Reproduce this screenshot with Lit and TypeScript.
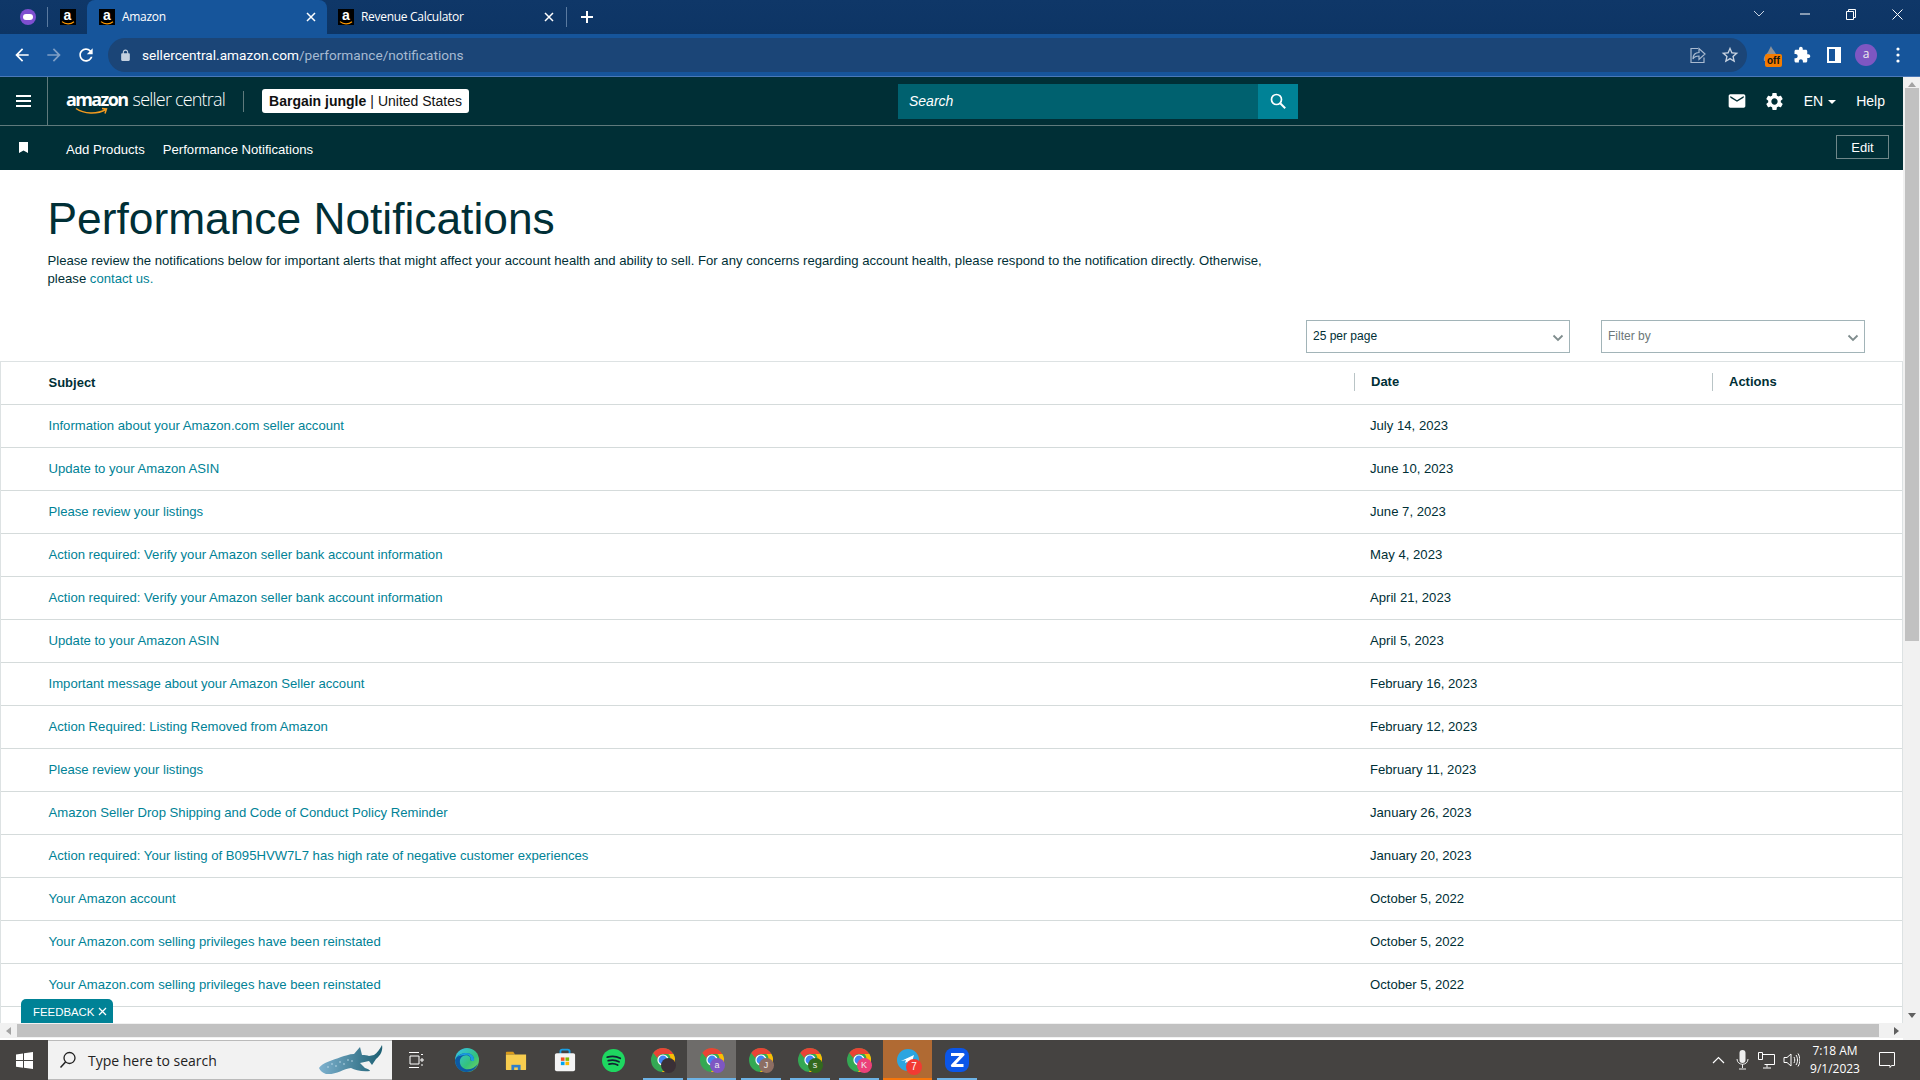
import { LitElement, html, css, svg } from "lit";
import { customElement } from "lit/decorators.js";

const ROWS: [string, string][] = [
  ["Information about your Amazon.com seller account", "July 14, 2023"],
  ["Update to your Amazon ASIN", "June 10, 2023"],
  ["Please review your listings", "June 7, 2023"],
  ["Action required: Verify your Amazon seller bank account information", "May 4, 2023"],
  ["Action required: Verify your Amazon seller bank account information", "April 21, 2023"],
  ["Update to your Amazon ASIN", "April 5, 2023"],
  ["Important message about your Amazon Seller account", "February 16, 2023"],
  ["Action Required: Listing Removed from Amazon", "February 12, 2023"],
  ["Please review your listings", "February 11, 2023"],
  ["Amazon Seller Drop Shipping and Code of Conduct Policy Reminder", "January 26, 2023"],
  ["Action required: Your listing of B095HVW7L7 has high rate of negative customer experiences", "January 20, 2023"],
  ["Your Amazon account", "October 5, 2022"],
  ["Your Amazon.com selling privileges have been reinstated", "October 5, 2022"],
  ["Your Amazon.com selling privileges have been reinstated", "October 5, 2022"],
  ["Your Amazon.com Selling Account", "September 28, 2022"],
];

const P = {
  back: "M20 11H7.83l5.59-5.59L12 4l-8 8 8 8 1.41-1.41L7.83 13H20v-2z",
  fwd: "M12 4l-1.41 1.41L16.17 11H4v2h12.17l-5.58 5.59L12 20l8-8z",
  reload: "M17.65 6.35C16.2 4.9 14.21 4 12 4c-4.42 0-7.99 3.58-7.99 8s3.57 8 7.99 8c3.73 0 6.84-2.55 7.73-6h-2.08c-.82 2.33-3.04 4-5.65 4-3.31 0-6-2.69-6-6s2.69-6 6-6c1.66 0 3.14.69 4.22 1.78L13 11h7V4l-2.35 2.35z",
  lock: "M18 8h-1V6c0-2.76-2.24-5-5-5S7 3.24 7 6v2H6c-1.1 0-2 .9-2 2v10c0 1.1.9 2 2 2h12c1.1 0 2-.9 2-2V10c0-1.1-.9-2-2-2zM9 6c0-1.66 1.34-3 3-3s3 1.34 3 3v2H9V6z",
  star: "M22 9.24l-7.19-.62L12 2 9.19 8.63 2 9.24l5.46 4.73L5.82 21 12 17.27 18.18 21l-1.63-7.03L22 9.24zM12 15.4l-3.76 2.27 1-4.28-3.32-2.88 4.38-.38L12 6.1l1.71 4.04 4.38.38-3.32 2.88 1 4.28L12 15.4z",
  puzzle: "M20.5 11H19V7c0-1.1-.9-2-2-2h-4V3.5C13 2.12 11.88 1 10.5 1S8 2.12 8 3.5V5H4c-1.1 0-1.99.9-1.99 2v3.8H3.5c1.49 0 2.7 1.21 2.7 2.7s-1.21 2.7-2.7 2.7H2V20c0 1.1.9 2 2 2h3.8v-1.5c0-1.49 1.21-2.7 2.7-2.7 1.49 0 2.7 1.21 2.7 2.7V22H17c1.1 0 2-.9 2-2v-4h1.5c1.38 0 2.5-1.12 2.5-2.5S21.88 11 20.5 11z",
  mail: "M20 4H4c-1.1 0-2 .9-2 2v12c0 1.1.9 2 2 2h16c1.1 0 2-.9 2-2V6c0-1.1-.9-2-2-2zm0 4l-8 5-8-5V6l8 5 8-5v2z",
  gear: "M19.14 12.94c.04-.3.06-.61.06-.94 0-.32-.02-.64-.07-.94l2.03-1.58c.18-.14.23-.41.12-.61l-1.92-3.32c-.12-.22-.37-.29-.59-.22l-2.39.96c-.5-.38-1.03-.7-1.62-.94l-.36-2.54c-.04-.24-.24-.41-.48-.41h-3.84c-.24 0-.43.17-.47.41l-.36 2.54c-.59.24-1.13.57-1.62.94l-2.39-.96c-.22-.08-.47 0-.59.22L2.74 8.87c-.12.21-.08.47.12.61l2.03 1.58c-.05.3-.09.63-.09.94s.02.64.07.94l-2.03 1.58c-.18.14-.23.41-.12.61l1.92 3.32c.12.22.37.29.59.22l2.39-.96c.5.38 1.03.7 1.62.94l.36 2.54c.05.24.24.41.48.41h3.84c.24 0 .44-.17.47-.41l.36-2.54c.59-.24 1.13-.56 1.62-.94l2.39.96c.22.08.47 0 .59-.22l1.92-3.32c.12-.22.07-.47-.12-.61l-2.01-1.58zM12 15.6c-1.98 0-3.6-1.62-3.6-3.6s1.62-3.6 3.6-3.6 3.6 1.62 3.6 3.6-1.62 3.6-3.6 3.6z",
};

const ic = (d: string, size: number, fill = "#fff") =>
  html`<svg width=${size} height=${size} viewBox="0 0 24 24"><path d=${d} fill=${fill}></path></svg>`;

const fav = () => html`<span class="fav"><span class="fav-a">a</span><svg class="fav-s" width="14" height="4" viewBox="0 0 14 4"><path d="M1 0.6 C4.5 3.6 9.5 3.6 13 0.8" fill="none" stroke="#f90" stroke-width="1.2"></path></svg></span>`;

const x = () => html`<svg width="12" height="12" viewBox="0 0 12 12"><path d="M2 2l8 8M10 2l-8 8" stroke="#fff" stroke-width="1.5" fill="none"></path></svg>`;

const chromeSvg = svg`
  <circle cx="12" cy="12" r="12" fill="#34a853"></circle>
  <path d="M12 0a12 12 0 0 1 10.4 6H12a6 6 0 0 0-5.6 3.9L2.2 5A12 12 0 0 1 12 0z" fill="#ea4335"></path>
  <path d="M22.4 6A12 12 0 0 1 11 24l5.2-8a6 6 0 0 0 1-10z" fill="#fbbc04"></path>
  <circle cx="12" cy="12" r="5.6" fill="#fff"></circle>
  <circle cx="12" cy="12" r="4.4" fill="#4285f4"></circle>`;

const chrome = (letter: string, color: string, cls = "") => html`
  <div class="tb-item ${cls}">
    <span class="chrome">
      <svg width="24" height="24" viewBox="0 0 24 24">${chromeSvg}</svg>
      <span class="cbadge" style="background:${color}">${letter}</span>
    </span>
    <i class="ul"></i>
  </div>`;

@customElement("app-root")
export class AppRoot extends LitElement {
  static styles = css`
    :host { display: block; width: 1920px; height: 1080px; overflow: hidden; font-family: "Liberation Sans", Arial, sans-serif; color: #002f36; }
    * { box-sizing: border-box; }
    svg { display: block; flex: none; }

    /* browser tab strip */
    .tabs { height: 34px; background: linear-gradient(#0f3768, #0d3565); display: flex; align-items: flex-end; font-family: "Open Sans", sans-serif; color: #fff; font-size: 12px; }
    .pin { width: 39px; height: 34px; display: flex; align-items: center; justify-content: center; }
    .pin.first { width: 47px; padding-left: 9px; border-right: 0; }
    .sep { width: 1px; height: 20px; background: #5a7aa0; align-self: center; flex: none; }
    .pin-dot { width: 16px; height: 16px; border-radius: 50%; background: #7e4fd0; display: flex; align-items: center; justify-content: center; }
    .pin-dot i { width: 10px; height: 6px; background: #fff; border-radius: 3px; display: block; }
    .tab { width: 240px; height: 34px; display: flex; align-items: center; padding: 0 10px 0 12px; flex: none; }
    .tab.on { background: #16559b; border-radius: 8px 8px 0 0; padding-left: 12px; }
    .tab.second { padding: 0 12px 0 11px; }
    .tab .t { flex: 1; margin-left: 7px; white-space: nowrap; letter-spacing: -0.3px; padding-bottom: 1px; }
    .fav { width: 16px; height: 16px; background: #000; position: relative; display: block; flex: none; }
    .fav-a { position: absolute; left: 0; right: 0; top: 0; height: 13px; text-align: center; font: bold 14px/12px "Liberation Sans", sans-serif; color: #fff; }
    .fav-s { position: absolute; left: 1px; bottom: 0; }
    .plus { margin-left: 13px; align-self: center; }
    .spacer { flex: 1; }
    .win { width: 46px; height: 28px; display: flex; align-items: center; justify-content: center; align-self: flex-start; }

    /* browser toolbar */
    .toolbar { height: 43px; background: #16559b; border-bottom: 1px solid #4a78b8; display: flex; align-items: center; font-family: "Open Sans", sans-serif; padding-bottom: 0; }
    .nbtn { width: 32px; display: flex; justify-content: center; flex: none; }
    .nbtn.first { width: 38px; padding-left: 6px; margin-right: 0; }
    .omni { width: 1639px; height: 34px; margin-left: 6px; background: #1b4577; border-radius: 17px; display: flex; align-items: center; padding-left: 11px; font-size: 13px; color: #a6bad2; flex: none; }
    .omni b { font-weight: 400; color: #fff; }
    .url { margin-left: 10px; white-space: nowrap; font-family: "Roboto", sans-serif; font-size: 13.65px; }
    .omni .spacer { flex: 1; }
    .omni .oi { margin-right: 12px; }
    .ext { width: 32px; display: flex; justify-content: center; flex: none; }
    .ext-wrap { position: relative; width: 20px; height: 20px; }
    .offb { position: absolute; left: 3px; top: 9px; background: #f57c00; color: #111; font: bold 10px/13px "Liberation Sans", sans-serif; padding: 0 2px; border-radius: 2px; }
    .avatar { width: 22px; height: 22px; border-radius: 50%; background: #7e57c2; color: #eee; font-size: 12px; line-height: 20px; text-align: center; display: block; }

    /* main region */
    .mid { height: 963px; display: grid; grid-template-columns: 1903px 17px; grid-template-rows: 946px 17px; }
    .page { position: relative; overflow: hidden; background: #fff; }
    .hdr { height: 49px; background: #002f36; border-bottom: 1px solid #5f7a7c; display: flex; align-items: center; color: #fff; font-size: 14px; }
    .burger { width: 48px; height: 48px; border-right: 1px solid #5f7a7c; display: flex; flex-direction: column; gap: 3px; align-items: center; justify-content: center; padding-right: 1px; flex: none; }
    .burger i { width: 15px; height: 2px; background: #fff; display: block; }
    .logo { width: 161px; margin-left: 18px; height: 32px; position: relative; flex: none; white-space: nowrap; line-height: 28px; font-family: "Open Sans", sans-serif; font-size: 18px; }
    .logo b { font-weight: 700; letter-spacing: -1.6px; }
    .logo span { font-weight: 300; margin-left: 5px; letter-spacing: -0.8px; }
    .logo svg { position: absolute; left: 9px; top: 22px; }
    .vline { width: 1px; height: 21px; background: #5f7a7c; margin-left: 16px; flex: none; }
    .store { margin-left: 18px; width: 207px; height: 24px; background: #fff; border-radius: 3px; display: flex; align-items: center; justify-content: center; white-space: nowrap; font-size: 14px; color: #111; flex: none; }
    .store b { margin-right: 4px; }
    .store span { margin-left: 4px; }
    .search { margin-left: 429px; width: 400px; height: 35px; background: #00616f; display: flex; align-items: center; justify-content: space-between; padding-left: 11px; font-style: italic; font-size: 14px; flex: none; }
    .search-b { width: 40px; height: 35px; background: #008296; display: flex; align-items: center; justify-content: center; }
    .hr { margin-left: auto; display: flex; align-items: center; }
    .hr .mailb { width: 38px; display: flex; justify-content: center; }
    .hr .gearb { width: 36px; margin-left: 1px; display: flex; justify-content: center; }
    .en { margin-left: 11px; display: flex; align-items: center; gap: 5px; }
    .caret { width: 0; height: 0; border-left: 4px solid transparent; border-right: 4px solid transparent; border-top: 4px solid #fff; margin-top: 1px; }
    .help { margin: 0 18px 0 20px; }

    .nav { height: 44px; background: #002f36; display: flex; align-items: center; color: #fff; font-size: 13.14px; padding: 2px 0 0 19px; }
    .nav .bm { width: 47px; flex: none; margin-top: -4px; }
    .nav a { margin-right: 18px; white-space: nowrap; }
    .edit { margin-left: auto; margin-right: 14px; width: 53px; height: 24px; border: 1px solid #6f8789; display: flex; align-items: center; justify-content: center; font-size: 13px; margin-top: -4px; }

    .body { padding: 0 0 0 47.5px; }
    h1 { margin: 0; padding-top: 21px; font-size: 44.3px; line-height: 56px; font-weight: 400; color: #002f36; white-space: nowrap; }
    .intro { margin: 5px 0 0; width: 1225px; font-size: 13.14px; line-height: 18px; color: #002f36; }
    .link { color: #008296; }
    .ctrls { display: flex; justify-content: flex-end; gap: 31px; padding-right: 38px; height: 33px; margin-top: 32px; }
    .sel { width: 264px; height: 33px; border: 1px solid #a2b4b8; display: flex; align-items: center; justify-content: space-between; padding: 0 5px 2px 6px; font-size: 12px; color: #002f36; }
    .sel.ph { color: #6c7778; }
    .sel svg { margin-top: 4px; }

    .table { margin-top: 8px; border: 1px solid #dde2e3; border-width: 1px 1px 0 1px; }
    .row { display: grid; grid-template-columns: 1353px 358px 1fr; height: 43px; border-bottom: 1px solid #d5dbdb; align-items: center; font-size: 13.14px; padding-bottom: 2px; }
    .row.head { font-weight: 700; color: #002f36; font-size: 13px; }
    .c0 { padding-left: 47.5px; }
    .row:not(.head) .c0 { color: #008296; white-space: nowrap; }
    .c1 { color: #002f36; }
    .head .c1, .head .c2 { border-left: 1px solid #b9c4c6; height: 18px; line-height: 18px; padding-left: 16px; }
    .row:not(.head) .c1 { padding-left: 16px; }

    .fb { position: absolute; left: 21px; bottom: 0; width: 92px; height: 24px; background: #008296; color: #fff; border-radius: 5px 5px 0 0; font-size: 11.4px; display: flex; align-items: center; padding: 1px 0 0 12px; gap: 4px; }

    .vbar { background: #f1f1f1; display: flex; flex-direction: column; align-items: center; justify-content: space-between; padding: 5px 0 5px; }
    .thumb-v { width: 14px; height: 553px; background: #c1c1c1; margin-top: 1px; margin-bottom: auto; }
    .hbar { background: #f1f1f1; display: flex; align-items: center; padding: 0 0 0 6px; border-bottom: 2px solid #fff; }
    .thumb-h { height: 13px; width: 1862px; background: #c1c1c1; margin: 0 15px 0 6px; }
    .corner { background: #f1f1f1; }
    .ua { width: 0; height: 0; border-left: 4px solid transparent; border-right: 4px solid transparent; border-bottom: 5px solid #a3a3a3; flex: none; }
    .ua.d { border-bottom: 0; border-top: 5px solid #606060; }
    .ua.l { border: 4px solid transparent; border-left: 0; border-right: 5px solid #a3a3a3; }
    .ua.r { border: 4px solid transparent; border-right: 0; border-left: 5px solid #606060; }

    /* taskbar */
    .task { height: 40px; background: #454341; display: flex; align-items: stretch; color: #fff; font-family: "Open Sans", sans-serif; }
    .start { width: 48px; display: flex; align-items: center; justify-content: center; }
    .tsearch { width: 344px; background: #f2f2f2; display: flex; align-items: center; padding-left: 11px; color: #222; font-size: 14px; gap: 11px; border: 1px solid #bbb; border-width: 1px 0; }
    .tsearch .sharktxt { white-space: nowrap; }
    .tsearch svg.shark { margin-left: auto; margin-right: 8px; }
    .tb-item { width: 49px; display: flex; align-items: center; justify-content: center; position: relative; flex: none; }
    .tb-item .ul { position: absolute; left: 4.5px; right: 4.5px; bottom: 0; height: 2px; background: #6db3e6; }
    .tb-item.act { background: #6e6c6a; }
    .tb-item.act .ul { left: 0; right: 0; }
    .tb-item.tg { background: #b06a33; }
    .tb-item.tg .ul { left: 0; right: 0; background: #f7760a; }
    .tb-item.tv { width: 47px; margin-right: 3px; }
    .chrome { position: relative; width: 24px; height: 24px; display: block; }
    .cbadge { position: absolute; right: -1px; bottom: -1px; width: 15px; height: 15px; border-radius: 50%; color: #eee; font: 9px/15px "Liberation Sans", sans-serif; text-align: center; }
    .tgb { position: absolute; right: 10px; bottom: 5px; width: 16px; height: 16px; border-radius: 50%; background: #f23a33; color: #fff; font: 10px/16px "Liberation Sans", sans-serif; text-align: center; }
    .tray { margin-left: auto; display: flex; align-items: center; }
    .tray .ti { display: flex; justify-content: center; flex: none; }
    .clock { width: 52px; text-align: center; font-size: 12px; line-height: 18px; margin-left: 6px; white-space: nowrap; }
    .notif { width: 59px; display: flex; justify-content: center; padding-right: 7px; }
  `;

  render() {
    return html`
      <div class="tabs">
        <div class="pin first"><span class="pin-dot"><i></i></span></div>
        <span class="sep"></span>
        <div class="pin">${fav()}</div>
        <div class="tab on">${fav()}<span class="t">Amazon</span>${x()}</div>
        <div class="tab second">${fav()}<span class="t">Revenue Calculator</span>${x()}</div>
        <span class="sep" style="margin-left:-1px"></span>
        <span class="plus">
          <svg width="14" height="14" viewBox="0 0 14 14"><path d="M7 1v12M1 7h12" stroke="#fff" stroke-width="2"></path></svg>
        </span>
        <span class="spacer"></span>
        <div class="win"><svg width="12" height="8" viewBox="0 0 12 8"><path d="M1 1l5 5 5-5" stroke="#c8d4e2" fill="none"></path></svg></div>
        <div class="win"><svg width="10" height="2" viewBox="0 0 10 2"><path d="M0 1h10" stroke="#fff"></path></svg></div>
        <div class="win"><svg width="10" height="11" viewBox="0 0 10 11"><path d="M.5 2.5h7v8h-7zM2.5 2.5v-2h7v8h-2" stroke="#fff" fill="none"></path></svg></div>
        <div class="win"><svg width="11" height="11" viewBox="0 0 11 11"><path d="M.5.5l10 10M10.5.5l-10 10" stroke="#fff" fill="none"></path></svg></div>
      </div>

      <div class="toolbar">
        <span class="nbtn first">${ic(P.back, 20)}</span>
        <span class="nbtn">${ic(P.fwd, 20, "#7f9fc6")}</span>
        <span class="nbtn">${ic(P.reload, 20)}</span>
        <div class="omni">
          ${ic(P.lock, 13, "#c4d0df")}
          <span class="url"><b>sellercentral.amazon.com</b>/performance/notifications</span>
          <span class="spacer"></span>
          <span class="oi">
            <svg width="20" height="20" viewBox="0 0 20 20"><path d="M10 3h-7v14h13v-5M11 7V3l6 5.500-6 5.500v-3.500c-3 0-5 1-6 3 0-4 2-6.500 6-6.500z" transform="translate(0 .5)" stroke="#a9bad0" stroke-width="1.200" fill="none"></path></svg>
          </span>
          <span class="oi" style="margin-right:7px">${ic(P.star, 20, "#c7d2e0")}</span>
        </div>
        <span class="ext" style="margin-left:9px">
          <span class="ext-wrap">
            <svg width="18" height="16" viewBox="0 0 18 16"><path d="M2 16c-1-5 2-6 4-9 1-2 2-4 3-6 1 3 3 4 5 8 1 2 1 5 0 7z" fill="#8c9198"></path></svg>
            <span class="offb">off</span>
          </span>
        </span>
        <span class="ext" style="margin-left:-2px">${ic(P.puzzle, 18)}</span>
        <span class="ext">
          <svg width="14" height="16" viewBox="0 0 14 16"><path fill-rule="evenodd" d="M0 0h14v16H0zM2 2v12h6V2z" fill="#fff"></path></svg>
        </span>
        <span class="ext"><span class="avatar">a</span></span>
        <span class="ext">
          <svg width="4" height="16" viewBox="0 0 4 16"><circle cx="2" cy="2" r="1.600" fill="#fff"></circle><circle cx="2" cy="8" r="1.600" fill="#fff"></circle><circle cx="2" cy="14" r="1.600" fill="#fff"></circle></svg>
        </span>
      </div>

      <div class="mid">
        <div class="page">
          <div class="hdr">
            <div class="burger"><i></i><i></i><i></i></div>
            <div class="logo">
              <b>amazon</b><span>seller central</span>
              <svg width="34" height="9" viewBox="0 0 34 9"><path d="M1 1.500C9 7 22 7.500 31 2.500M27 1.500l4.500.5-1.500 4.500" fill="none" stroke="#f29a1f" stroke-width="1.500"></path></svg>
            </div>
            <span class="vline"></span>
            <div class="store"><b>Bargain jungle</b>|<span>United States</span></div>
            <div class="search">
              <span>Search</span>
              <span class="search-b">
                <svg width="18" height="18" viewBox="0 0 18 18"><circle cx="7.500" cy="7.500" r="5" fill="none" stroke="#fff" stroke-width="1.700"></circle><path d="M11.200 11.200l5 5" stroke="#fff" stroke-width="2"></path></svg>
              </span>
            </div>
            <div class="hr">
              <span class="mailb">${ic(P.mail, 20)}</span>
              <span class="gearb">${ic(P.gear, 21)}</span>
              <span class="en">EN<i class="caret"></i></span>
              <span class="help">Help</span>
            </div>
          </div>
          <div class="nav">
            <span class="bm"><svg width="9" height="11" viewBox="0 0 9 11"><path d="M0 0h9v11L4.500 8.500 0 11z" fill="#fff"></path></svg></span>
            <a>Add Products</a>
            <a>Performance Notifications</a>
            <span class="edit">Edit</span>
          </div>
          <div class="body">
            <h1>Performance Notifications</h1>
            <p class="intro">Please review the notifications below for important alerts that might affect your account health and ability to sell. For any concerns regarding account health, please respond to the notification directly. Otherwise, please <span class="link">contact us.</span></p>
          </div>
          <div class="ctrls">
            <div class="sel">25 per page <svg width="12" height="8" viewBox="0 0 12 8"><path d="M1.500 1.500L6 6l4.500-4.500" stroke="#7f8c8d" stroke-width="1.800" fill="none"></path></svg></div>
            <div class="sel ph">Filter by <svg width="12" height="8" viewBox="0 0 12 8"><path d="M1.500 1.500L6 6l4.500-4.500" stroke="#7f8c8d" stroke-width="1.800" fill="none"></path></svg></div>
          </div>
          <div class="table">
            <div class="row head"><div class="c0">Subject</div><div class="c1">Date</div><div class="c2">Actions</div></div>
            ${ROWS.map(([s, d]) => html`<div class="row"><div class="c0">${s}</div><div class="c1">${d}</div><div></div></div>`)}
          </div>
          <div class="fb">FEEDBACK <svg width="9" height="9" viewBox="0 0 9 9"><path d="M1 1l7 7M8 1L1 8" stroke="#fff" stroke-width="1.300"></path></svg></div>
        </div>
        <div class="vbar"><i class="ua"></i><i class="thumb-v"></i><i class="ua d"></i></div>
        <div class="hbar"><i class="ua l"></i><i class="thumb-h"></i><i class="ua r"></i></div>
        <div class="corner"></div>
      </div>

      <div class="task">
        <div class="start">
          <svg width="17" height="17" viewBox="0 0 17 17"><path d="M0 2.400l7-1v6.700H0zM8 1.200l9-1.200v8.100H8zM0 9h7v6.700l-7-1zM8 9h9v8l-9-1.200z" fill="#fff"></path></svg>
        </div>
        <div class="tsearch">
          <svg width="18" height="18" viewBox="0 0 18 18"><circle cx="10.500" cy="7" r="5.500" fill="none" stroke="#222" stroke-width="1.300"></circle><path d="M6.500 11L1.500 16.500" stroke="#222" stroke-width="1.500"></path></svg>
          <span class="sharktxt">Type here to search</span>
          <svg class="shark" width="66" height="32" viewBox="0 0 66 32">
            <defs><linearGradient id="sk" x1="0" y1="0" x2="1" y2="0"><stop offset="0" stop-color="#7fb2cf"></stop><stop offset="1" stop-color="#1c5f72"></stop></linearGradient></defs>
            <path d="M1 24c3-5 14-8 22-11 4-1 8-3 13-3l6-7 2 8c3 0 5 0 7 1l5-1c3-2 6-6 8-10 1 5-1 10-6 14l-4 6-3-4c-3 1-6 1-9 2l5 5c3 1 5 2 5 3-8 1-15-1-19-3-8 1-15 7-25 6-3-1-6-3-7-6z" fill="url(#sk)"></path>
            <g fill="#d6ebf5"><circle cx="10" cy="23" r=".7"></circle><circle cx="14" cy="20" r=".7"></circle><circle cx="18" cy="22" r=".7"></circle><circle cx="22" cy="18" r=".7"></circle><circle cx="26" cy="20" r=".7"></circle><circle cx="30" cy="16" r=".7"></circle><circle cx="34" cy="17" r=".7"></circle></g>
          </svg>
        </div>
        <div class="tb-item tv">
          <svg width="16" height="16" viewBox="0 0 16 16"><path d="M1 .5h10M1 15.500h10M2 4h9v8H2zM13 2.500h2M13 7h2v2h-2zM13 13h2" stroke="#fff" fill="none"></path></svg>
        </div>
        <div class="tb-item">
          <svg width="24" height="24" viewBox="0 0 24 24">
            <defs><linearGradient id="eg" x1="0" y1="0" x2="1" y2="1"><stop offset="0" stop-color="#35c1f1"></stop><stop offset=".6" stop-color="#34c27b"></stop><stop offset="1" stop-color="#7ed55b"></stop></linearGradient></defs>
            <circle cx="12" cy="12" r="12" fill="url(#eg)"></circle>
            <path d="M23.500 15c-2 5-6 9-12 9C5 24 0 19 0 12 2 7 7 5 11 5c5 0 8 3 8 6.500 0 1.500-3 2-3.500 .5 1-4-4-6-7.500-4-4 2-4 8-1 11 4 4 11 3 16.500-3.500z" fill="#0c59a4"></path>
            <path d="M10 7c4-1 6 2 6 5 .5 2 3.500 1 3-.5C19 8 16 5 11 5 8 5 4 6.500 1.500 9.500 4 7.500 7 7.500 10 7z" fill="#1b9de2"></path>
          </svg>
        </div>
        <div class="tb-item">
          <svg width="22" height="19" viewBox="0 0 24 22" preserveAspectRatio="none"><path d="M1 2a1 1 0 0 1 1-1h7l2 3h-10z" fill="#d99a1b"></path><path d="M1 4h22v17a1 1 0 0 1-1 1H2a1 1 0 0 1-1-1z" fill="#f7cd4f"></path><path d="M7 16h10v6H7z" fill="#2f7fc9"></path><path d="M10 19h4v3h-4z" fill="#f7cd4f"></path></svg>
        </div>
        <div class="tb-item">
          <svg width="22" height="24" viewBox="0 0 24 28" preserveAspectRatio="none"><path d="M7 7V4a2 2 0 0 1 2-2h6a2 2 0 0 1 2 2v3" stroke="#19a0e6" stroke-width="2" fill="none"></path><rect x="1" y="6" width="22" height="21" rx="2" fill="#f4f4f4"></rect><rect x="7.500" y="11" width="4" height="4" fill="#f25022"></rect><rect x="12.500" y="11" width="4" height="4" fill="#7fba00"></rect><rect x="7.500" y="16" width="4" height="4" fill="#00a4ef"></rect><rect x="12.500" y="16" width="4" height="4" fill="#ffb900"></rect></svg>
        </div>
        <div class="tb-item">
          <svg width="23" height="23" viewBox="0 0 24 24"><circle cx="12" cy="12" r="12" fill="#1ed760"></circle><path d="M5.500 8.500c4.500-1.300 9.500-1 13.500 1.200M6.500 12.200c3.800-1 8-.7 11.200 1.100M7.300 15.700c3-.8 6.400-.5 9 1" stroke="#123" stroke-width="1.900" stroke-linecap="round" fill="none"></path></svg>
        </div>
        ${chrome("", "#3a3036")}
        ${chrome("a", "#7e57c2", "act")}
        ${chrome("J", "#8d6e63")}
        ${chrome("s", "#33691e")}
        ${chrome("K", "#ec407a")}
        <div class="tb-item tg">
          <svg width="22" height="22" viewBox="0 0 22 22"><circle cx="11" cy="11" r="11" fill="#2ca5e0"></circle><path d="M4 12l13-6-3 10-4-3-2 1 1-3z" fill="#fff"></path></svg>
          <span class="tgb">7</span>
          <i class="ul"></i>
        </div>
        <div class="tb-item">
          <svg width="24" height="24" viewBox="0 0 24 24"><rect width="24" height="24" rx="8" fill="#0b56e8"></rect><path d="M6 6.500h12L7.500 17.500H18.500" stroke="#fff" stroke-width="3.200" fill="none" stroke-linejoin="round"></path></svg>
          <i class="ul"></i>
        </div>
        <div class="tray">
          <span class="ti" style="width:24px"><svg width="13" height="8" viewBox="0 0 13 8"><path d="M1 7l5.500-5.500L12 7" stroke="#fff" stroke-width="1.200" fill="none"></path></svg></span>
          <span class="ti" style="width:24px"><svg width="13" height="20" viewBox="0 0 13 20"><rect x="3.500" y="0" width="6" height="13" rx="3" fill="#eee"></rect><path d="M1 9c0 7 11 7 11 0M6.500 14v4M3 19h7" stroke="#eee" fill="none"></path></svg></span>
          <span class="ti" style="width:25px"><svg width="17" height="17" viewBox="0 0 17 17"><path d="M4.500 2.500h12v10h-10M.5.500h4v7h-4zM9 12.500v3M5 16h8" stroke="#fff" fill="none"></path></svg></span>
          <span class="ti" style="width:24px"><svg width="17" height="16" viewBox="0 0 17 16"><path d="M1 5.500h3L8 2v12L4 10.500H1zM11 5c1 2 1 4 0 6M13 3c2 3 2 7 0 10M15 1.500c2.500 4 2.500 9 0 13" stroke="#fff" fill="none"></path></svg></span>
          <div class="clock">7:18 AM<br />9/1/2023</div>
          <span class="notif"><svg width="16" height="17" viewBox="0 0 16 17"><path d="M.5.500h15v13h-3l-1.500 2v-2H.5z" stroke="#fff" fill="none"></path></svg></span>
        </div>
      </div>
    `;
  }
}
